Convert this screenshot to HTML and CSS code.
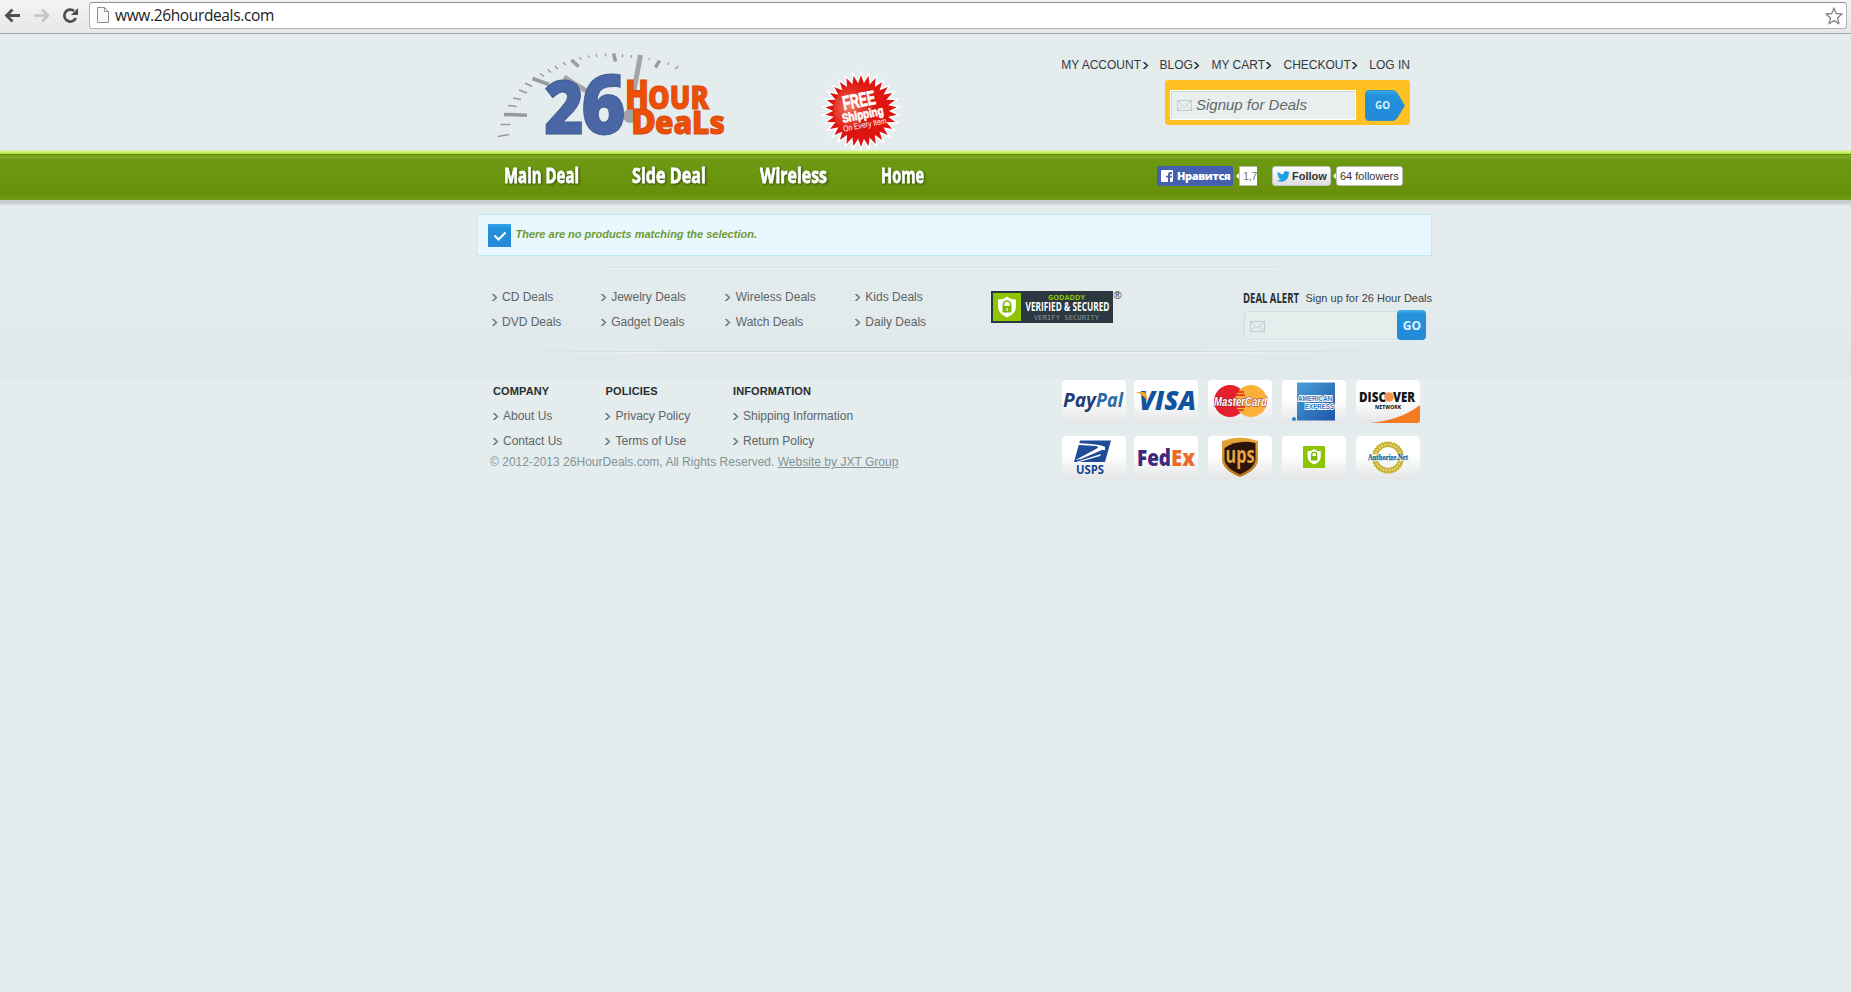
FILE: index.html
```html
<!DOCTYPE html>
<html lang="en">
<head>
<meta charset="utf-8">
<title>26 Hour Deals</title>
<link rel="stylesheet" href="styles.css">
</head>
<body>
<svg class="defs" width="0" height="0">
  <defs>
    <path id="chev" d="M0 0H2.500V1H3.500V2H4.500V3H5.300V4H4.500V5H3.500V6H2.500V7H0V6H1V5H2V4H3V3H2V2H1V1H0Z"/>
    <g id="mail"><rect x=".5" y=".5" width="14" height="10"/><path d="M1 1l6.500 6L14 1M1 10l4.500-4.500M14 10l-4.500-4.500"/></g>
    <path id="shield" d="M0 3Q6 3 9 0Q12 3 18 3V10Q18 17 9 21Q0 17 0 10Z"/>
    <g id="spikes">
      <path id="spike" d="M-3.500 -26L0 -36L3.500 -26Z"/>
      <use href="#spike" transform="rotate(12)"/><use href="#spike" transform="rotate(24)"/>
      <use href="#spike" transform="rotate(36)"/><use href="#spike" transform="rotate(48)"/>
    </g>
    <g id="burst">
      <circle r="27.500"/>
      <use href="#spikes"/><use href="#spikes" transform="rotate(60)"/><use href="#spikes" transform="rotate(120)"/>
      <use href="#spikes" transform="rotate(180)"/><use href="#spikes" transform="rotate(240)"/><use href="#spikes" transform="rotate(300)"/>
    </g>
    <linearGradient id="gold" x1="0" y1="0" x2="0" y2="1"><stop offset="0" stop-color="#e8a83c"/><stop offset="1" stop-color="#b8741c"/></linearGradient>
    <radialGradient id="glow" gradientUnits="userSpaceOnUse" cx="-12" cy="-4" r="27"><stop offset="0" stop-color="#f58a70" stop-opacity=".9"/><stop offset="1" stop-color="#e8301c" stop-opacity=".2"/></radialGradient>
    <linearGradient id="amex" x1="0" y1="0" x2="1" y2="1"><stop offset="0" stop-color="#4aa0d8"/><stop offset="1" stop-color="#1c55a8"/></linearGradient>
    <linearGradient id="go" x1="0" y1="0" x2="0" y2="1"><stop offset="0" stop-color="#35a7e8"/><stop offset=".18" stop-color="#2191dc"/><stop offset="1" stop-color="#2489d8"/></linearGradient>
  </defs>
</svg>

<div class="toolbar">
  <svg class="nav-icons" width="89" height="33" viewBox="0 0 89 33" fill="none">
    <path d="M20 15.500H7M12.500 9.500L6.500 15.500L12.500 21.500" stroke="#4f4f4f" stroke-width="2.800"/>
    <path d="M34 15.500H47M42 9.500L48 15.500L42 21.500" stroke="#c4c4c4" stroke-width="2.600"/>
    <path d="M75.800 18A6 6 0 1 1 74 10.800" stroke="#4f4f4f" stroke-width="2.800"/>
    <path d="M78 8V15H71Z" fill="#4f4f4f"/>
  </svg>
  <div class="omnibox">
    <svg width="12" height="17" viewBox="0 0 12 17"><path d="M.5 .5H7.500L11.500 4.500V15.500H.5ZM7.500 .5V4.500H11.500" fill="#f8f8f8" stroke="#8e8e8e"/></svg>
    <span class="url">www.26hourdeals.com</span>
    <svg class="fav" width="18" height="18" viewBox="0 0 18 18"><path d="M9 1L11.200 6.500L17 7L12.500 10.900L14 16.800L9 13.600L4 16.800L5.500 10.900L1 7L6.800 6.500Z" fill="#fff" stroke="#848484" stroke-width="1.300" stroke-linejoin="round"/></svg>
  </div>
</div>

<header class="header">
  <div class="wrap header-row">
    <svg class="logo" width="280" height="110" viewBox="0 0 280 110">
      <g stroke="#999a9d" fill="none">
        <path stroke-width="3.500" d="M24 74.500L47 75.200M52.500 38.500L69 44.500M91.500 20L98.500 26.500M133.500 13.500L135.500 21.500M179.500 20.500L175.500 27.500"/>
        <path stroke-width="1.500" d="M18 96.500L29 94.500M20.500 84.500H30.500M28 65.500L36.500 66.500M39 50L47 53M33 58L41 59.500M45 43L52 46.500M60 33.500L64 36.500M67.500 29.500L71 32.500M75 26L78 29M83 22.500L86 25"/>
        <path stroke-width="1.200" d="M99.500 17L101.500 20M108 15.500L109.500 18M116 14L117 17M125 13.500L126 16.500M142.500 14V17.500M151.500 15L151 18M169.500 18L169 20M189 22.500L187.500 25M198.500 26L195 29"/>
        <path stroke-width="5" stroke="#a2a3a6" d="M160.500 15L154 50M84 37L108 52"/>
      </g>
      <circle cx="150" cy="76" r="7" fill="#a2a3a6"/>
      <g class="lt digits"><text x="64" y="94" font-size="75" textLength="40" lengthAdjust="spacingAndGlyphs">2</text><text x="101" y="94" font-size="83" textLength="45" lengthAdjust="spacingAndGlyphs">6</text></g>
      <g class="lt words">
        <text x="145" y="69" font-size="40" textLength="24" lengthAdjust="spacingAndGlyphs">H</text><text x="168" y="69" font-size="31" textLength="61" lengthAdjust="spacingAndGlyphs">OUR</text>
        <text x="151" y="93.500" font-size="36" textLength="25" lengthAdjust="spacingAndGlyphs">D</text><text x="175" y="93.500" font-size="31" textLength="70" lengthAdjust="spacingAndGlyphs">eaLs</text>
      </g>
    </svg>
    <svg class="seal" width="84" height="82" viewBox="-42 -41 84 82">
      <use href="#burst" fill="#fff" stroke="#fff" stroke-width="3"/>
      <use href="#burst" fill="#dd1410"/>
      <path d="M-27 4A27 27 0 0 1 22 -16Q10 2 -14 23A27 27 0 0 1 -27 4Z" fill="url(#glow)"/>
      <g fill="#fff" transform="rotate(-11)" class="seal-text" text-anchor="middle">
        <text y="-4" font-size="20" font-weight="700" stroke="#fff" stroke-width=".8" textLength="33" lengthAdjust="spacingAndGlyphs">FREE</text>
        <text x="1" y="8" font-size="12.500" font-weight="700" stroke="#fff" stroke-width=".7" textLength="42" lengthAdjust="spacingAndGlyphs">Shipping</text>
        <text x="1" y="17" font-size="8.500" textLength="44" lengthAdjust="spacingAndGlyphs">On Every Item</text>
      </g>
    </svg>
    <div class="account">
      <nav class="account-links">
        <a>MY ACCOUNT<svg width="6" height="7"><use href="#chev"/></svg></a>
        <a>BLOG<svg width="6" height="7"><use href="#chev"/></svg></a>
        <a>MY CART<svg width="6" height="7"><use href="#chev"/></svg></a>
        <a>CHECKOUT<svg width="6" height="7"><use href="#chev"/></svg></a>
        <a>LOG IN</a>
      </nav>
      <div class="signup">
        <div class="signup-field"><svg class="mail" width="15" height="11"><use href="#mail"/></svg><span>Signup for Deals</span></div>
        <svg width="40" height="31" viewBox="0 0 40 31"><path d="M4 .5H27Q30 .5 32 3L39.500 15.500L32 28Q30 30.500 27 30.500H4Q.5 30.500 .5 27V4Q.5 .5 4 .5Z" fill="url(#go)" stroke="#2f94c8"/><text class="go-text" x="10" y="19" font-size="11" textLength="15" lengthAdjust="spacingAndGlyphs">GO</text></svg>
      </div>
    </div>
  </div>
</header>

<div class="mainnav">
  <div class="wrap mainnav-row">
    <a class="n1"><svg width="80" height="30"><text x="1" y="21" textLength="75" lengthAdjust="spacingAndGlyphs">Main Deal</text></svg></a>
    <a class="n2"><svg width="80" height="30"><text x="1" y="21" textLength="74" lengthAdjust="spacingAndGlyphs">Side Deal</text></svg></a>
    <a class="n3"><svg width="80" height="30"><text x="1" y="21" textLength="67" lengthAdjust="spacingAndGlyphs">Wireless</text></svg></a>
    <a class="n4"><svg width="50" height="30"><text x="1" y="21" textLength="43" lengthAdjust="spacingAndGlyphs">Home</text></svg></a>
    <div class="social">
      <span class="fb"><svg width="12" height="12" viewBox="0 0 12 12"><rect width="12" height="12" rx="1" fill="#fff"/><path d="M7 12V7.500H5.200V5.700H7V4.500Q7 2 9.500 2H11V3.900H9.800Q9 3.900 9 4.700V5.700H11L10.700 7.500H9V12Z" fill="#4460ae"/></svg><b>Нравится</b></span>
      <span class="count fb-count">1,7</span>
      <span class="tw"><svg width="13" height="11" viewBox="0 0 24 20"><path d="M24 2.400a10 10 0 0 1-2.800.8A5 5 0 0 0 23.300.5a10 10 0 0 1-3.100 1.200A4.900 4.900 0 0 0 11.800 6.100 14 14 0 0 1 1.700 1a4.900 4.900 0 0 0 1.500 6.600A5 5 0 0 1 1 7a4.900 4.900 0 0 0 4 4.800 5 5 0 0 1-2.300.1 4.900 4.900 0 0 0 4.600 3.400A10 10 0 0 1 0 17.400 14 14 0 0 0 21.500 4.900 10 10 0 0 0 24 2.400Z" fill="#1e9fe0"/></svg>Follow</span>
      <span class="count tw-count">64 followers</span>
    </div>
  </div>
</div>

<main class="wrap">
  <div class="notice">
    <svg width="23" height="23"><rect width="23" height="23" fill="url(#go)"/><path d="M6.500 11.500L10.500 15.500L17.500 8.500" fill="none" stroke="#fff" stroke-width="2.200"/></svg>
    <span>There are no products matching the selection.</span>
  </div>
</main>

<footer class="footer">
  <div class="wrap">
    <div class="deals">
      <div class="links d1"><a><svg width="6" height="7"><use href="#chev"/></svg>CD Deals</a><a><svg width="6" height="7"><use href="#chev"/></svg>DVD Deals</a></div>
      <div class="links d2"><a><svg width="6" height="7"><use href="#chev"/></svg>Jewelry Deals</a><a><svg width="6" height="7"><use href="#chev"/></svg>Gadget Deals</a></div>
      <div class="links d3"><a><svg width="6" height="7"><use href="#chev"/></svg>Wireless Deals</a><a><svg width="6" height="7"><use href="#chev"/></svg>Watch Deals</a></div>
      <div class="links d4"><a><svg width="6" height="7"><use href="#chev"/></svg>Kids Deals</a><a><svg width="6" height="7"><use href="#chev"/></svg>Daily Deals</a></div>
      <svg class="godaddy" width="134" height="33" viewBox="0 0 134 33">
        <rect width="122" height="32" fill="#2b383f"/><rect x="2" y="2" width="28" height="28" fill="#8fc400"/>
        <use href="#shield" x="7" y="5.500" fill="#fff"/>
        <path d="M12.500 15V13.500a3.500 3.500 0 0 1 7 0V15" fill="none" stroke="#7db700" stroke-width="1.600"/><rect x="11.500" y="15" width="9" height="6.500" fill="#7db700"/><path d="M16 17V20" stroke="#fff" stroke-width="1.200"/>
        <text class="open b" x="57" y="8.500" font-size="7.500" fill="#8fc400" textLength="37" lengthAdjust="spacingAndGlyphs">GODADDY</text>
        <text class="open b" x="34.500" y="20" font-size="11.500" fill="#fff" textLength="84" lengthAdjust="spacingAndGlyphs">VERIFIED &amp; SECURED</text>
        <text class="mono" x="43" y="29" font-size="7" fill="#87959b" textLength="65" lengthAdjust="spacingAndGlyphs">VERIFY SECURITY</text>
        <text class="arial" x="122.500" y="8" font-size="11" fill="#333">®</text>
      </svg>
      <div class="alert">
        <div class="alert-title"><svg width="62" height="18"><text x="0" y="13" textLength="56" lengthAdjust="spacingAndGlyphs">DEAL ALERT</text></svg><span>Sign up for 26 Hour Deals</span></div>
        <div class="alert-form"><div class="alert-field"><svg class="mail" width="15" height="11"><use href="#mail"/></svg></div><button class="alert-go">GO</button></div>
      </div>
    </div>
  </div>
</footer>

<section class="bottom">
  <div class="wrap bottom-row">
    <div class="info">
      <div class="info-cols">
        <div class="links c1"><h4>COMPANY</h4><a><svg width="6" height="7"><use href="#chev"/></svg>About Us</a><a><svg width="6" height="7"><use href="#chev"/></svg>Contact Us</a></div>
        <div class="links c2"><h4>POLICIES</h4><a><svg width="6" height="7"><use href="#chev"/></svg>Privacy Policy</a><a><svg width="6" height="7"><use href="#chev"/></svg>Terms of Use</a></div>
        <div class="links c3"><h4>INFORMATION</h4><a><svg width="6" height="7"><use href="#chev"/></svg>Shipping Information</a><a><svg width="6" height="7"><use href="#chev"/></svg>Return Policy</a></div>
      </div>
      <p class="copy">© 2012-2013 26HourDeals.com, All Rights Reserved. <a>Website by JXT Group</a></p>
    </div>
    <div class="cards">
      <svg class="card" viewBox="0 0 64 43"><g class="open b i" font-size="19"><text x="1" y="27" fill="#253b74" textLength="33" lengthAdjust="spacingAndGlyphs">Pay</text><text x="34" y="27" fill="#2c6ba5" textLength="27" lengthAdjust="spacingAndGlyphs">Pal</text></g></svg>
      <svg class="card" viewBox="0 0 64 43"><text class="open xb i" x="5" y="30" font-size="26" fill="#10539c" textLength="57" lengthAdjust="spacingAndGlyphs">VISA</text><path d="M2 12H9Q12 12 12.500 15L14 22Q10 15 2 12Z" fill="#f3a52c"/></svg>
      <svg class="card" viewBox="0 0 64 43"><circle cx="22" cy="21" r="16" fill="#e5202c"/><circle cx="43" cy="21" r="16" fill="#fbb03b"/><path d="M28 12H36M27 15H37M27 27H37M28 30H36" stroke="#e5202c" stroke-width="1.300"/><g class="arial b i" font-size="12"><text x="6" y="25.500" fill="#fff" stroke="#8d2025" stroke-width="1" paint-order="stroke" textLength="53" lengthAdjust="spacingAndGlyphs">MasterCard</text></g></svg>
      <svg class="card" viewBox="0 0 64 43"><rect x="15" y="2.500" width="38" height="38" fill="url(#amex)"/><circle cx="12" cy="39" r="2" fill="#2c84c4"/><g class="arial b" font-size="8" fill="#3477bb" stroke="#fff" stroke-width="2" paint-order="stroke"><text x="16" y="21" textLength="34" lengthAdjust="spacingAndGlyphs">AMERICAN</text><text x="23" y="29" textLength="29" lengthAdjust="spacingAndGlyphs">EXPRESS</text></g></svg>
      <svg class="card" viewBox="0 0 64 43"><path d="M14 43Q45 40 64 25V40Q64 43 61 43Z" fill="#f47b20"/><g class="open xb" font-size="14" fill="#151515"><text x="3" y="22" textLength="27" lengthAdjust="spacingAndGlyphs">DISC</text><text x="37" y="22" textLength="22" lengthAdjust="spacingAndGlyphs">VER</text></g><circle cx="33" cy="17" r="4.800" fill="#f49550"/><text class="open b" x="19" y="28.500" font-size="5" textLength="26">NETWORK</text></svg>
      <svg class="card" viewBox="0 0 64 43"><path d="M18 4.500H49L43 26H12Z" fill="#1f4c97"/><path d="M16.500 9L34 10Q38 11 34 13L13.500 24L19 23L40 14H43V11Q40 8.500 16 7ZM14 26L39 18L38 20L17 26Z" fill="#fff"/><text class="open b" x="14" y="38" font-size="11.500" fill="#17468c" textLength="28" lengthAdjust="spacingAndGlyphs">USPS</text></svg>
      <svg class="card" viewBox="0 0 64 43"><g class="open xb" font-size="22"><text x="3" y="30" fill="#40297e" textLength="34" lengthAdjust="spacingAndGlyphs">Fed</text><text x="37" y="30" fill="#ee6a28" textLength="24" lengthAdjust="spacingAndGlyphs">Ex</text></g></svg>
      <svg class="card" viewBox="0 0 64 43"><path d="M14 5Q32 -2 50 5V23Q50 34 32 41Q14 34 14 23Z" fill="url(#gold)"/><path d="M16.500 12Q30 3 47.500 7V23Q47 32 32 38.500Q17 32 16.500 23Z" fill="#2b1408"/><text class="open b" x="17.500" y="27" font-size="24" fill="#e3a545" textLength="29" lengthAdjust="spacingAndGlyphs">ups</text></svg>
      <svg class="card" viewBox="0 0 64 43"><rect x="21" y="10" width="22" height="22" fill="#8dc400"/><g transform="translate(25.500 13) scale(.74)"><use href="#shield" fill="#fff"/><path d="M5.700 10V7.500a3.300 3.300 0 0 1 6.600 0V10" fill="none" stroke="#7db700" stroke-width="1.600"/><rect x="4.700" y="9.500" width="8.600" height="6" fill="#7db700"/></g></svg>
      <svg class="card" viewBox="0 0 64 43"><circle cx="32" cy="21.500" r="13" fill="none" stroke="#c5b02c" stroke-width="5"/><circle cx="32" cy="21.500" r="15.500" fill="none" stroke="#c5b02c" stroke-width="1.500" stroke-dasharray="1.500"/><circle cx="32" cy="21.500" r="13" fill="none" stroke="#ebe29c" stroke-width="2" stroke-dasharray="1.500 1.500"/><rect x="14" y="18" width="37" height="7" fill="#fff" opacity=".75"/><text class="serif b" x="12" y="24" font-size="8" fill="#1b659d" stroke="#1b659d" stroke-width=".25" textLength="40" lengthAdjust="spacingAndGlyphs">Authorize.Net</text></svg>
    </div>
  </div>
</section>
</body>
</html>
```
FILE: styles.css
```css
* { box-sizing: border-box; }
body { margin: 0; min-height: 992px; background: #e4ecee; font: 12px/15px "Liberation Sans", Arial, sans-serif; color: #5d6566; overflow: hidden; }
svg { display: block; flex: none; overflow: visible; }
.defs { position: absolute; }
.wrap { width: 955px; margin-left: 477px; }

.toolbar { height: 34px; display: flex; background: linear-gradient(#f4f4f4, #e6e6e8); border-bottom: 1px solid #a9a6ae; }
.omnibox { margin: 2px 4px 4px 0; flex: 1; display: flex; align-items: center; background: #fff; border: 1px solid #b4b4b8; border-top-color: #909094; border-radius: 3px; padding: 0 3px 0 7px; }
.url { flex: 1; margin: -2px 0 0 6px; font: 15.500px/22px "Open Sans", sans-serif; letter-spacing: -.36px; color: #222; }

.header { height: 116px; }
.header-row { display: flex; height: 116px; align-items: flex-start; }
.logo { margin: 6px 0 0 3px; }
.lt { font-family: "Open Sans", sans-serif; font-weight: 800; }
.digits { fill: #4a67a5; stroke: #3d588f; stroke-width: .8; }
.words { fill: #ee4f06; stroke: #d64a0c; stroke-width: .9; }
.seal { margin: 36px 0 0 59px; }
.seal-text { font-family: "Liberation Sans", Arial, sans-serif; }
.account { flex: 1; margin: 24px 22px 0 0; display: flex; flex-direction: column; align-items: flex-end; }
.account-links { display: flex; gap: 11px; color: #333b3d; line-height: 15px; }
.account-links a { display: flex; align-items: center; }
.account-links svg { margin: 0 0 0 1.500px; fill: #3e494b; }
.signup { width: 245px; height: 45px; margin-top: 7px; padding: 10px 5px 4px; border-radius: 3px; background: #ffc222; display: flex; gap: 9px; }
.signup-field { width: 186px; height: 30px; border: 1px solid #fff; box-shadow: inset 1px 1px #c9d6da; background: #e9eeee; display: flex; align-items: center; padding-left: 6px; gap: 4px; font-style: italic; font-size: 15px; color: #5f686a; }
.signup-field span { margin-top: -1px; }
.mail { fill: none; stroke: #bfced2; }
.go-text { fill: #dcf3ff; font-family: "Open Sans", sans-serif; font-weight: 700; }

.mainnav { height: 56px; background: linear-gradient(#e4f4c0 0, #c9f06a 2px, #b4e73d 4px, #5b8508 4px, #5b8508 5px, #7ba31d 5px, #7ba31d 8px, #6d9912 10px, #67900a 46px, #719a14 47px, #719a14 50px, #c9cbcc 50px, #cccfd0 53px, #e4ecee 56px); }
.mainnav-row { display: flex; padding-top: 12px; }
.mainnav text { font: 700 21.500px "Open Sans", sans-serif; fill: #fff; stroke: #fff; stroke-width: .8; filter: drop-shadow(1px 1px 1px #34500a); }
.n1 { margin-left: 26px; }
.n2 { margin-left: 48px; }
.n3 { margin-left: 48px; }
.n4 { margin-left: 41px; }
.social { display: flex; margin: 4px 0 0 227px; font-size: 11px; color: #333; }
.fb { width: 76px; height: 20px; background: #4460ae; border-radius: 2px; display: flex; align-items: center; gap: 4px; padding-left: 4px; color: #fff; font: 700 11px "Open Sans", sans-serif; letter-spacing: -.4px; }
.fb b { margin-top: -1px; }
.count { position: relative; height: 20px; background: #fff; border: 1px solid #b9bcb5; display: flex; align-items: center; }
.count::before { content: ""; position: absolute; left: -4px; top: 6px; border: 3px solid transparent; border-right-color: #fff; border-left: 0; }
.fb-count { width: 18px; margin-left: 6px; border-right: 0; padding-left: 3px; color: #777; letter-spacing: -.4px; }
.tw { width: 59px; height: 20px; margin-left: 15px; border: 1px solid #c4c4c4; border-radius: 3px; background: linear-gradient(#fff, #dedede); display: flex; align-items: center; padding-left: 4px; gap: 2px; font-weight: 700; }
.tw-count { width: 67px; margin-left: 5px; padding-left: 3px; border-radius: 3px; white-space: nowrap; }

.notice { height: 42px; margin: 8px 0 1px; border: 1px solid #c0e9f1; background: #e8f8fe; display: flex; align-items: center; padding: 0 10px; gap: 4.500px; font: italic 700 11px/14px "Liberation Sans", Arial, sans-serif; color: #6f9a37; }
.notice span { margin-top: -3px; }

.footer { height: 122px; padding-top: 10px; background: linear-gradient(#e4ecee, #e0e8eb); }
.deals { height: 86px; display: flex; padding-top: 23px; background:
  linear-gradient(90deg, transparent 4%, #d3dcdf 25%, #d3dcdf 70%, transparent 96%) 0 0 / 100% 1px no-repeat,
  linear-gradient(90deg, transparent 4%, #eff5f6 25%, #eff5f6 70%, transparent 96%) 0 1px / 100% 1px no-repeat,
  linear-gradient(90deg, transparent 1%, #d0d9dd 20%, #d0d9dd 75%, transparent) 0 84px / 100% 1px no-repeat,
  linear-gradient(90deg, transparent 1%, #edf3f4 20%, #edf3f4 75%, transparent) 0 85px / 100% 1px no-repeat; }
.links a { display: flex; align-items: center; height: 15px; margin-bottom: 10px; white-space: nowrap; }
.links a svg { margin: 0 4.500px 0 -.5px; fill: #75878b; }
.d1 { width: 109px; margin-left: 15px; }
.d2 { width: 125px; }
.d3 { width: 130px; }
.d4 { width: 136px; }
.d2, .d3, .d4 { padding-left: .5px; }
.godaddy { margin: 1px 0 0 1px; }
.alert { margin: 0 0 0 118px; width: 189px; }
.alert-title { display: flex; height: 19px; color: #3c4446; font-size: 11px; white-space: nowrap; line-height: 16px; }
.alert-title text { font: 700 14px "Open Sans", sans-serif; fill: #272e30; }
.alert-form { display: flex; align-items: flex-start; }
.alert-field { width: 156px; height: 29px; margin: 2px 0 0 1px; border: 1px solid #d3dee1; border-right: 0; border-radius: 3px 0 0 3px; box-shadow: 0 1px #f2f6f7; background: #e6eded; padding: 9px 5px; }
.alert-go { width: 29px; height: 30px; margin: 1px 0 0 -3px; padding: 0; border: 0; border-radius: 4px; background: linear-gradient(#45aee9, #2292dd 4px, #2489d8); color: #dcf3ff; font: 700 12px "Open Sans", sans-serif; }

.bottom-row { display: flex; align-items: flex-start; }
.info { width: 585px; padding-top: 5px; }
.info-cols { display: flex; }
.info h4 { margin: 0 0 10px; font: 700 11px/15px "Liberation Sans", Arial, sans-serif; letter-spacing: .12px; color: #272e30; }
.c1 { width: 112.500px; margin-left: 16px; }
.c2 { width: 127.500px; }
.copy { margin: -4px 0 0 13px; color: #829496; white-space: nowrap; letter-spacing: .015px; }
.copy a { text-decoration: underline; }
.cards { display: grid; grid-template-columns: 72px 74px 74px 74px 64px; row-gap: 13px; padding-top: 1px; }
.card { width: 64px; height: 43px; background: linear-gradient(#fff 45%, #e4e5e7); border-radius: 4px; }
.open { font-family: "Open Sans", sans-serif; }
.arial { font-family: "Liberation Sans", Arial, sans-serif; }
.mono { font-family: "DejaVu Sans Mono", monospace; }
.serif { font-family: "Liberation Serif", serif; }
.b { font-weight: 700; }
.xb { font-weight: 800; }
.i { font-style: italic; }
```
